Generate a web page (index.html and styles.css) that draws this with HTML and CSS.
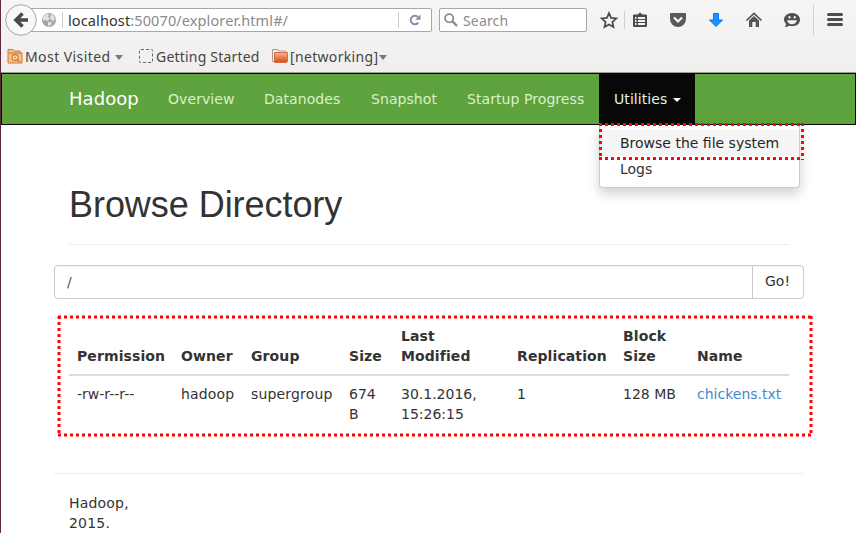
FILE: index.html
```html
<!DOCTYPE html>
<html lang="en">
<head>
<meta charset="utf-8">
<title>Browsing HDFS</title>
<link rel="stylesheet" href="styles.css">
</head>
<body>
<div class="window">
  <div class="chrome">
    <div class="toolbar">
      <div class="back"><svg width="32" height="32" viewBox="0 0 32 32"><circle cx="16" cy="16" r="15.3" fill="#f8f8f8" stroke="#a0a5ab"/><path d="M23 16H12M17.500 9.500L11 16l6.500 6.500" fill="none" stroke="#484848" stroke-width="3.600"/></svg></div>
      <div class="urlbar">
        <svg class="globe" width="14" height="14" viewBox="0 0 14 14"><circle cx="7" cy="7" r="7" fill="#a5a5a5"/><path d="M1 4l3-3 3 0-1 3 2 1-2 3-3-1-2 1zM9 1l3 2 1 4-3 1-2-3zM6 9l4 0-1 3-3 1z" fill="#e2e2e2"/></svg>
        <span class="rule"></span>
        <span class="url"><b>localhost</b>:50070/explorer.html#/</span>
        <span class="rule reload-rule"></span>
        <svg class="reload" width="12" height="12" viewBox="0 0 12 12"><path d="M9.300 8.700A4.300 4.300 0 1 1 9 3" fill="none" stroke="#8291a1" stroke-width="2"/><path d="M11.500.5v5.300H6.200z" fill="#8291a1"/></svg>
      </div>
      <div class="search">
        <svg width="14" height="14" viewBox="0 0 14 14"><circle cx="5.200" cy="5.200" r="4.100" fill="none" stroke="#8a8a8a" stroke-width="1.800"/><path d="M8.200 8.200L13 13" stroke="#8a8a8a" stroke-width="2.400"/></svg>
        <span>Search</span>
      </div>
      <svg class="tools" width="269" height="40" viewBox="0 0 269 40">
        <path d="M22 13.200l2.100 4.700 5.200.6-3.900 3.500 1.100 5.100-4.500-2.600-4.500 2.600 1.100-5.100-3.900-3.500 5.200-.6z" fill="none" stroke="#4a4a4a" stroke-width="1.700"/>
        <path d="M37.500 11v18" stroke="#d0d0d0"/>
        <path d="M47 14.500h3.500L53 12.500l2.500 2H59a1 1 0 0 1 1 1V26a1 1 0 0 1-1 1H47a1 1 0 0 1-1-1V15.500a1 1 0 0 1 1-1z" fill="#4d4d4d"/><path d="M48 18h1.500m1.500 0h7M48 21h1.500m1.500 0h7M48 24h1.500m1.500 0h7" stroke="#f3f3f3" stroke-width="1.800"/>
        <path d="M84 13h14q1 0 1 1v5a8 8 0 0 1-16 0v-5q0-1 1-1z" fill="#595959"/><path d="M87 17.500l4 4 4-4" fill="none" stroke="#f5f5f5" stroke-width="2.200"/>
        <path d="M126.500 13.500h5v6.500h4L129 26.500l-6.500-6.500h4z" fill="#1593ff" stroke="#0874e6"/>
        <path d="M159.500 20.500l7.500-7 7.500 7" fill="none" stroke="#555" stroke-width="1.700"/><path d="M162 20.500l5-4.500 5 4.500V27h-3.300v-5h-3.400v5H162z" fill="#555"/>
        <path d="M205 13c4.700 0 8 3 8 6.700s-3.300 6.500-8 6.500c-1 0-2-.2-3-.5-1.500 1-3 1.300-4.300 1.300.8-.8 1.300-1.800 1.400-3A6 6 0 0 1 197 19.700C197 16 200.300 13 205 13z" fill="#505050"/><ellipse cx="202.500" cy="17.300" rx="1.100" ry="1.300" fill="#f3f3f3"/><ellipse cx="207.700" cy="17.300" rx="1.100" ry="1.300" fill="#f3f3f3"/><path d="M200 20.200h10c-.7 2.700-2.500 4-5 4s-4.300-1.300-5-4z" fill="#f3f3f3"/>
        <path d="M226.500 4v32" stroke="#d2d2d2"/>
        <path d="M241.500 14.500h13M241.500 19.500h13M241.500 24.500h13" stroke="#4d4d4d" stroke-width="3" stroke-linecap="round"/>
      </svg>
    </div>
    <div class="bookmarks">
      <svg class="bm-icon" width="16" height="16" viewBox="0 0 16 16"><path d="M1 14V1.500h5L7.500 3H13v2h2v10H1z" fill="#f4c28f" stroke="#d07a2c"/><path d="M1 5h14" stroke="#d07a2c"/><circle cx="8" cy="9.500" r="3" fill="#fbe6cf" stroke="#d77c2d" stroke-width="1.300"/><circle cx="8" cy="9.500" r="1" fill="#d77c2d"/><path d="M10.300 11.800L13 14" stroke="#d77c2d" stroke-width="1.500"/></svg>
      <span class="most">Most Visited</span><i class="tri"></i>
      <i class="dashed"></i><span class="started">Getting Started</span>
      <svg class="bm-icon folder" width="16" height="16" viewBox="0 0 16 16"><defs><linearGradient id="f" x2="0" y2="1"><stop stop-color="#f8b591"/><stop offset="1" stop-color="#d84a15"/></linearGradient></defs><path d="M.5 13.500V1.500H6L7 3h6.500v10.500z" fill="#f8eee9" stroke="#ad9b94"/><path d="M2.500 4.500h13v9l-1 1h-12z" fill="url(#f)" stroke="#d66d43"/></svg>
      <span class="net">[networking]</span><i class="tri"></i>
    </div>
  </div>
  <nav class="navbar">
    <a class="brand">Hadoop</a><a class="n1">Overview</a><a class="n2">Datanodes</a><a class="n3">Snapshot</a><a class="n4">Startup Progress</a>
    <div class="dropdown"><a class="active">Utilities<i class="caret"></i></a>
      <div class="menu"><a class="hover">Browse the file system</a><a>Logs</a></div>
    </div>
  </nav>
  <main class="container">
    <h1>Browse Directory</h1>
    <div class="path"><div class="field">/</div><div class="go">Go!</div></div>
    <table>
      <colgroup><col class="c1"><col class="c2"><col class="c3"><col class="c4"><col class="c5"><col class="c6"><col class="c7"><col class="c8"></colgroup>
      <thead><tr><th>Permission</th><th>Owner</th><th>Group</th><th>Size</th><th>Last<br>Modified</th><th>Replication</th><th>Block<br>Size</th><th>Name</th></tr></thead>
      <tbody><tr><td>-rw-r--r--</td><td class="wide">hadoop</td><td class="wide">supergroup</td><td>674<br>B</td><td>30.1.2016,<br>15:26:15</td><td>1</td><td>128 MB</td><td><a>chickens.txt</a></td></tr></tbody>
    </table>
    <footer>Hadoop,<br>2015.</footer>
  </main>
  <svg class="marks" width="856" height="533"><g fill="none" stroke="#ff0505" stroke-width="3" stroke-dasharray="3 3"><path d="M599 124.500H803M599 158.500H803M600.500 123V160M802.500 123V160"/><path d="M58 317H812M58 435H812M59 316V436M811 316V436"/></g></svg>
</div>
</body>
</html>
```
FILE: styles.css
```css
* { box-sizing: border-box; }
body { margin: 0; background: #fff; color: #333; font: 14px/20px "DejaVu Sans", sans-serif; }
.window { position: relative; width: 856px; height: 533px; overflow: hidden; border-left: 1px solid #5c2b3c; }
.chrome { height: 73px; background: linear-gradient(#f6f5f4, #f0efee); border-bottom: 1px solid #9b9a98; font-family: "Noto Sans", sans-serif; color: #444; }
.toolbar { display: flex; height: 40px; align-items: center; }
.back { z-index: 1; width: 32px; height: 32px; margin-left: 4px; }
.urlbar { display: flex; align-items: center; width: 411px; height: 24px; margin-left: -16px; padding-left: 20px; background: #fff; border: 1px solid #aaa7a3; border-radius: 2px; }
.globe { flex: none; }
.rule { flex: none; width: 1px; height: 16px; margin: 0 5px 0 6px; background: #ccc; }
.url { flex: none; width: 328px; color: #8b8b8b; font-size: 14.5px; white-space: nowrap; letter-spacing: .11px; }
.url b { color: #333; font-weight: 400; }
.reload-rule { margin: 0 10px 0 2px; }
.reload { flex: none; }
.search { display: flex; align-items: center; gap: 5px; width: 148px; height: 24px; margin-left: 7px; padding-left: 4px; background: #fff; border: 1px solid #aaa7a3; border-radius: 2px; color: #8b8b8b; font-size: 14px; letter-spacing: .15px; }
.search span { padding-top: 1px; }
.tools { flex: none; }
.bookmarks { display: flex; height: 32px; align-items: center; padding-left: 6px; font-size: 14px; white-space: nowrap; }
.bm-icon { flex: none; }
.bookmarks span { flex: none; padding-top: 2px; }
.most { width: 87px; margin-left: 2px; letter-spacing: .42px; }
.tri { flex: none; margin: 2px 0 0 3px; border: 4px solid transparent; border-top: 5px solid #777; border-bottom: 0; }
.dashed { flex: none; width: 14px; height: 14px; margin-left: 16px; border: 1px dashed #666; border-radius: 2px; }
.started { width: 104px; margin-left: 3px; letter-spacing: .2px; }
.folder { margin-left: 12px; }
.net { width: 86px; margin-left: 2px; letter-spacing: .33px; }
.navbar { display: flex; height: 52px; padding-left: 52px; background: #5fa33e; border: 1px solid #080808; }
.navbar > a, .active { display: block; padding: 15px 0 15px 15px; color: #d9f0cb; white-space: nowrap; letter-spacing: .07px; }
.navbar .brand { width: 99px; color: #fff; font-size: 18px; }
.navbar .n1, .navbar .n3 { width: 96px; }
.navbar .n2 { width: 107px; }
.navbar .n4 { width: 147px; }
.dropdown { position: relative; height: 51px; }
.dropdown .active { width: 96px; height: 51px; background: #080808; color: #e5f2df; }
.caret { display: inline-block; margin-left: 6px; vertical-align: middle; border: 4px solid transparent; border-top-color: #fff; border-bottom: 0; }
.menu { position: absolute; z-index: 1; top: 51px; left: 0; width: 201px; height: 63px; padding-top: 5px; background: #fff; border: 1px solid #ccc; border-top: 0; border-radius: 0 0 4px 4px; box-shadow: 0 6px 12px rgba(0,0,0,.18); }
.menu a { display: block; padding: 3px 20px; color: #333; white-space: nowrap; }
.menu .hover { background: #f5f5f5; color: #262626; }
.container { width: 750px; margin-left: 53px; }
h1 { height: 80px; margin: 40px 15px 20px; padding-top: 20px; border-bottom: 1px solid #eee; font: 400 36px/40px "Liberation Sans", sans-serif; letter-spacing: -.05px; }
.path { display: flex; height: 34px; border: 1px solid #ccc; border-radius: 4px; box-shadow: inset 0 1px 1px rgba(0,0,0,.06); }
.field { flex: 1; padding: 6px 12px; color: #555; }
.go { width: 51px; padding: 5px 12px; border-left: 1px solid #ccc; color: #333; }
table { width: 720px; margin: 19px 15px 0; border-collapse: collapse; table-layout: fixed; }
th, td { padding: 8px; text-align: left; white-space: nowrap; vertical-align: top; }
th { vertical-align: bottom; border-bottom: 2px solid #ddd; letter-spacing: .1px; }
.wide { letter-spacing: .17px; }
td a { color: #428bca; }
.c1 { width: 104px; } .c2 { width: 70px; } .c3 { width: 98px; } .c4 { width: 52px; }
.c5 { width: 116px; } .c6 { width: 106px; } .c7 { width: 74px; } .c8 { width: 100px; }
footer { margin-top: 41px; padding: 19px 15px; border-top: 1px solid #eee; letter-spacing: .2px; }
.marks { position: absolute; z-index: 2; top: 0; left: -1px; }
```
